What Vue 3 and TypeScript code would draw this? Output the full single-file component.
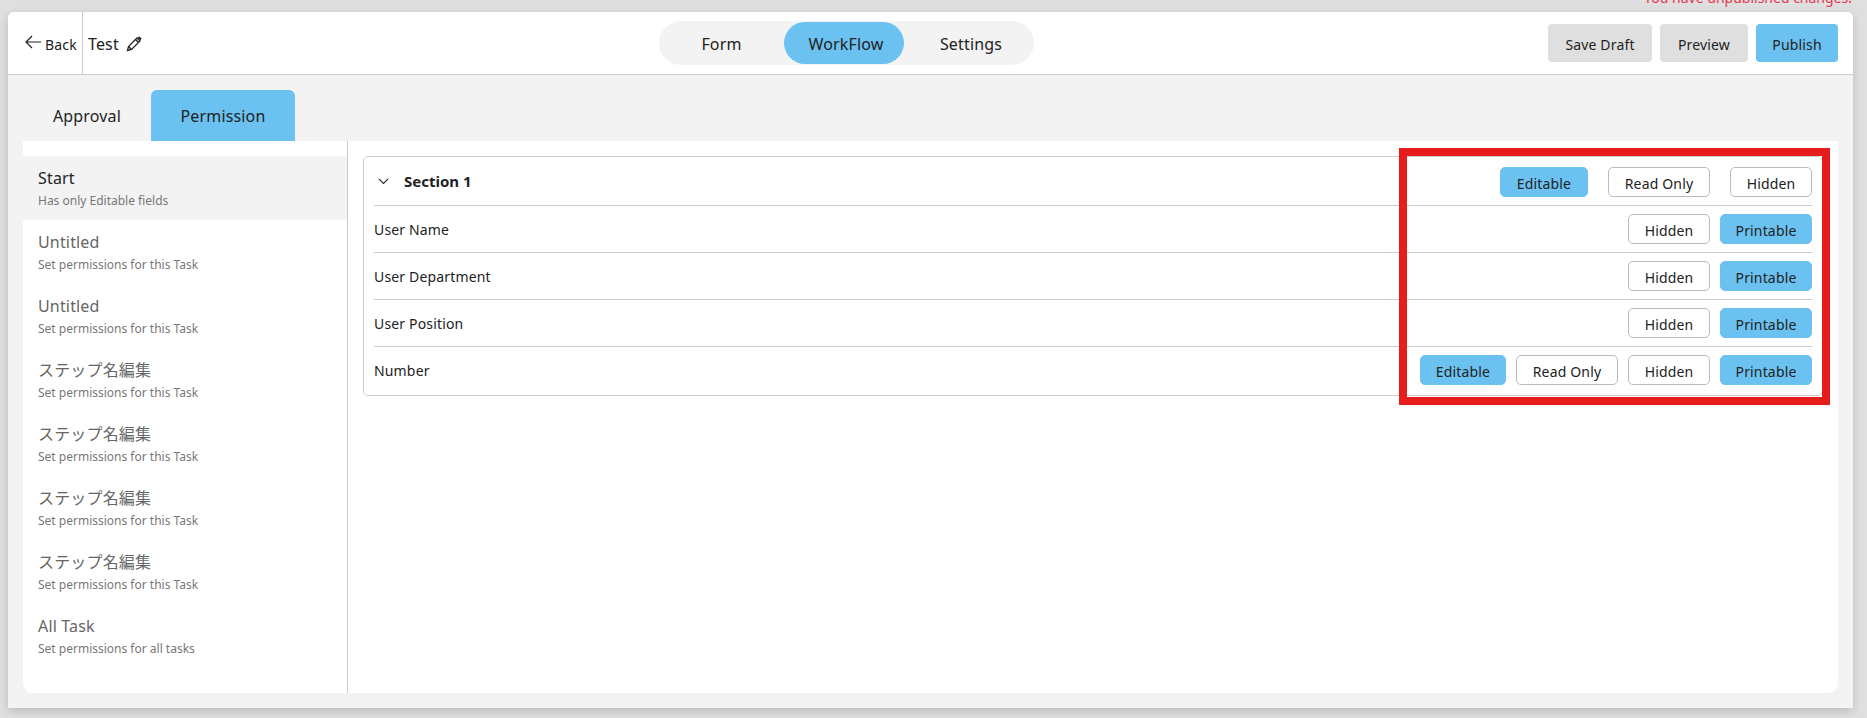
<script setup lang="ts">
interface Step { title: string; sub: string; active?: boolean }
interface Row { name: string; editable?: boolean }

const steps: Step[] = [
  { title: 'Start', sub: 'Has only Editable fields', active: true },
  { title: 'Untitled', sub: 'Set permissions for this Task' },
  { title: 'Untitled', sub: 'Set permissions for this Task' },
  { title: 'ステップ名編集', sub: 'Set permissions for this Task' },
  { title: 'ステップ名編集', sub: 'Set permissions for this Task' },
  { title: 'ステップ名編集', sub: 'Set permissions for this Task' },
  { title: 'ステップ名編集', sub: 'Set permissions for this Task' },
  { title: 'All Task', sub: 'Set permissions for all tasks' },
]
const rows: Row[] = [
  { name: 'User Name' },
  { name: 'User Department' },
  { name: 'User Position' },
  { name: 'Number', editable: true },
]
</script>

<template>
  <div class="page">
    <div class="notice">You have unpublished changes!</div>
    <div class="shell">
      <header class="topbar">
        <button class="back">
          <svg width="16" height="14" viewBox="0 0 16 14" fill="none" stroke="#222" stroke-width="1.2">
            <path d="M16 7H1M7 1 1 7l6 6" />
          </svg>
          <span>Back</span>
        </button>
        <div class="name">
          <span>Test</span>
          <svg width="16" height="16" viewBox="0 0 16 16" fill="none" stroke="#222" stroke-width="1.3">
            <path d="M1.500 14.500 2.500 10.500 11 2l3 3-8.500 8.500z" />
            <path d="M9.500 3.500l3 3M2.500 10.500l3 3" />
            <path d="M12.500 1l2.500 2.500" stroke-width="2.200" />
          </svg>
        </div>
        <nav class="segments">
          <span class="segment">Form</span>
          <span class="segment on">WorkFlow</span>
          <span class="segment nudge">Settings</span>
        </nav>
        <div class="actions">
          <button class="act draft">Save Draft</button>
          <button class="act preview">Preview</button>
          <button class="act publish">Publish</button>
        </div>
      </header>

      <main class="body">
        <div class="tabs">
          <div class="tab approval">Approval</div>
          <div class="tab permission">Permission</div>
        </div>
        <div class="panel">
          <aside class="steps">
            <div v-for="(s, i) in steps" :key="i" class="step" :class="{ active: s.active }">
              <div class="step-title">{{ s.title }}</div>
              <div class="step-sub">{{ s.sub }}</div>
            </div>
          </aside>
          <section class="content">
            <div class="card">
              <div class="row head">
                <svg class="chev" width="11" height="7" viewBox="0 0 11 7" fill="none" stroke="#222" stroke-width="1.100">
                  <path d="M.8.8 5.500 5.500 10.200.8" />
                </svg>
                <span class="section-name">Section 1</span>
                <div class="head-btns">
                  <span class="pill blue w88">Editable</span>
                  <span class="pill w102">Read Only</span>
                  <span class="pill w82">Hidden</span>
                </div>
              </div>
              <div v-for="r in rows" :key="r.name" class="row">
                <span class="label">{{ r.name }}</span>
                <div class="row-btns">
                  <template v-if="r.editable">
                    <span class="pill blue w86">Editable</span>
                    <span class="pill w102">Read Only</span>
                  </template>
                  <span class="pill w82">Hidden</span>
                  <span class="pill blue w92">Printable</span>
                </div>
              </div>
            </div>
            <div class="highlight"></div>
          </section>
        </div>
      </main>
    </div>
  </div>
</template>

<style>
html, body { margin: 0; background: #dfdfdf; }
</style>

<style scoped>
* { box-sizing: border-box; }
.page {
  position: relative;
  height: 718px;
  padding: 12px 14px 10px 8px;
  background: #dfdfdf;
  overflow: hidden;
  font-family: "Noto Sans", "Noto Sans CJK JP", sans-serif;
  letter-spacing: .01em;
  color: #222;
}
.notice {
  position: absolute;
  top: -12px;
  right: 15px;
  font-size: 14px;
  line-height: 20px;
  letter-spacing: 0;
  color: #e8384f;
}
.shell {
  height: 696px;
  display: flex;
  flex-direction: column;
  background: #f3f3f3;
  border-radius: 6px 6px 0 0;
  box-shadow: 0 3px 10px rgba(0, 0, 0, .16);
}
.topbar {
  position: relative;
  flex: none;
  height: 63px;
  display: flex;
  align-items: center;
  background: #fff;
  border-bottom: 1px solid #ccc;
  border-radius: 6px 6px 0 0;
}
.back {
  width: 75px;
  height: 62px;
  padding: 2px 0 0 17px;
  display: flex;
  align-items: center;
  gap: 4px;
  border: 0;
  border-right: 1px solid #ccc;
  background: none;
  font: inherit;
  letter-spacing: inherit;
  font-size: 14px;
  color: #222;
}
.back svg { margin-top: -4px; }
.name {
  margin-left: 5px;
  padding-top: 1px;
  display: flex;
  align-items: center;
  gap: 7px;
  font-size: 16px;
}
.segments {
  position: absolute;
  left: 651px;
  top: 9px;
  width: 375px;
  height: 44px;
  display: grid;
  grid-template-columns: 125px 120px 130px;
  align-items: center;
  background: #f3f3f3;
  border-radius: 22px;
}
.segment {
  height: 42px;
  padding-top: 1px;
  display: flex;
  align-items: center;
  justify-content: center;
  font-size: 16px;
  border-radius: 21px;
}
.segment.on { padding-left: 4px; background: #6bc1f0; }
.segment.nudge { padding-left: 4px; }
.actions {
  margin-left: auto;
  margin-right: 15px;
  display: flex;
  gap: 8px;
}
.act {
  height: 38px;
  padding: 2px 0 0;
  border: 0;
  border-radius: 4px;
  font: inherit;
  letter-spacing: inherit;
  font-size: 14px;
  color: #222;
  background: #dfdfdf;
}
.draft { width: 104px; }
.preview { width: 88px; }
.publish { width: 82px; background: #6bc1f0; }
.body {
  flex: 1;
  min-height: 0;
  display: flex;
  flex-direction: column;
  padding: 15px;
}
.tabs {
  flex: none;
  height: 51px;
  display: flex;
}
.tab {
  padding-top: 1px;
  display: flex;
  align-items: center;
  justify-content: center;
  font-size: 16px;
}
.approval { width: 128px; }
.permission {
  width: 144px;
  background: #6bc1f0;
  border-radius: 6px 6px 0 0;
}
.panel {
  flex: 1;
  min-height: 0;
  display: flex;
  background: #fff;
  border-radius: 0 0 10px 10px;
}
.steps {
  flex: none;
  width: 325px;
  padding-top: 15px;
  border-right: 1px solid #ccc;
}
.step {
  height: 64px;
  padding: 11px 15px 0;
  color: #666;
}
.step.active { background: #f3f3f3; }
.step.active .step-title { color: #222; }
.step-title { font-size: 16px; line-height: 22px; }
.step-sub { margin-top: 3px; font-size: 12px; line-height: 17px; letter-spacing: 0; color: #777; }
.content {
  position: relative;
  flex: 1;
  padding: 15px 15px 0;
}
.card {
  padding: 0 10px 2px;
  border: 1px solid #ccc;
  border-radius: 5px;
}
.row {
  height: 47px;
  display: flex;
  align-items: center;
  border-top: 1px solid #ccc;
  font-size: 14px;
}
.row.head {
  height: 48px;
  border-top: 0;
}
.chev { margin: 1px 0 0 4px; }
.section-name {
  margin-left: 15px;
  font-size: 15px;
  font-weight: 700;
  letter-spacing: 0;
}
.head-btns, .row-btns {
  margin-left: auto;
  display: flex;
}
.head-btns { gap: 20px; margin-top: 2px; }
.row-btns { gap: 10px; }
.pill {
  height: 30px;
  padding-top: 2px;
  display: flex;
  align-items: center;
  justify-content: center;
  border: 1px solid #bbb;
  border-radius: 5px;
  background: #fff;
  font-size: 14px;
}
.pill.blue { background: #6bc1f0; border-color: #6bc1f0; }
.w82 { width: 82px; }
.w86 { width: 86px; }
.w88 { width: 88px; }
.w92 { width: 92px; }
.w102 { width: 102px; }
.highlight {
  position: absolute;
  left: 1051px;
  top: 7px;
  width: 431px;
  height: 257px;
  border: 8px solid #e71d1d;
  pointer-events: none;
}
</style>
